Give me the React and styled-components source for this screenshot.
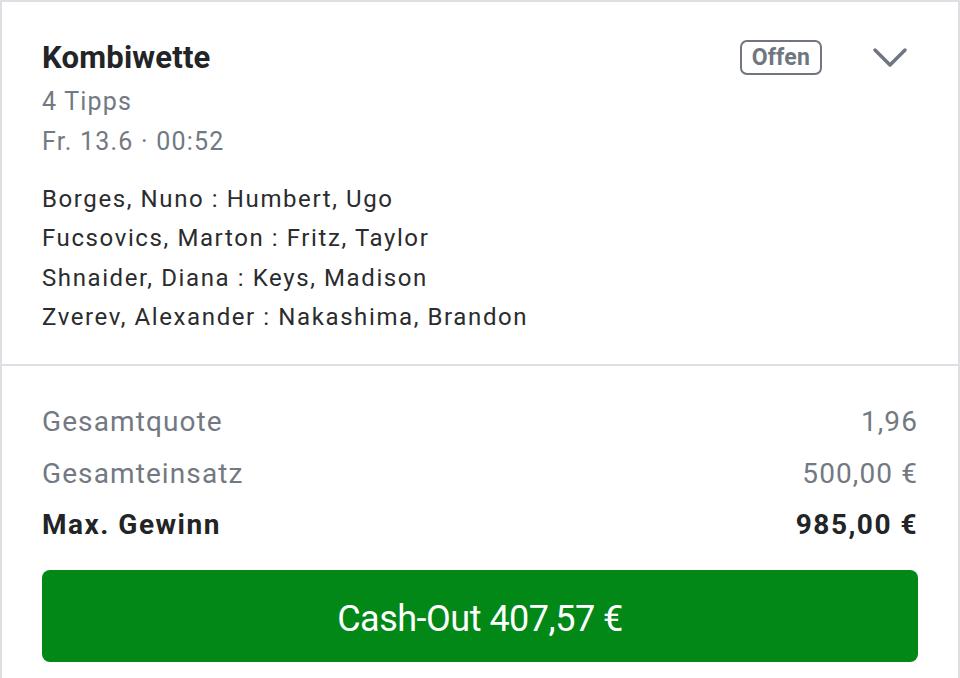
import React from 'react';
import styled, { createGlobalStyle } from 'styled-components';

const GlobalStyle = createGlobalStyle`
  html, body {
    margin: 0;
    padding: 0;
    background: #fff;
  }
  body {
    font-family: 'Roboto', 'Liberation Sans', sans-serif;
    color: #2a2c2e;
  }
`;

const picks = [
  'Borges, Nuno : Humbert, Ugo',
  'Fucsovics, Marton : Fritz, Taylor',
  'Shnaider, Diana : Keys, Madison',
  'Zverev, Alexander : Nakashima, Brandon',
];

const summary = [
  { label: 'Gesamtquote', value: '1,96' },
  { label: 'Gesamteinsatz', value: '500,00 €' },
  { label: 'Max. Gewinn', value: '985,00 €', strong: true },
];

const App = () => {
  return (
    <>
      <GlobalStyle />
      <Card>
        <Header>
          <HeaderTop>
            <Title>Kombiwette</Title>
            <Actions>
              <Badge>Offen</Badge>
              <Chevron width="36" height="24" viewBox="0 0 36 24">
                <polyline points="3,4 18,19 33,4" />
              </Chevron>
            </Actions>
          </HeaderTop>
          <Meta $gap={7}>4 Tipps</Meta>
          <Meta $gap={2}>Fr. 13.6 · 00:52</Meta>
          <Picks>
            {picks.map((p) => (
              <Pick key={p}>{p}</Pick>
            ))}
          </Picks>
        </Header>
        <Summary>
          {summary.map((row) => (
            <Row key={row.label} $strong={row.strong}>
              <span>{row.label}</span>
              <span>{row.value}</span>
            </Row>
          ))}
          <CashOut>Cash-Out 407,57 €</CashOut>
        </Summary>
      </Card>
    </>
  );
};

const Card = styled.div`
  box-sizing: border-box;
  width: 960px;
  height: 678px;
  border: 2px solid #dcdfe4;
  border-bottom: none;
  background: #fff;
  overflow: hidden;
`;

const Header = styled.div`
  padding: 38px 40px 27px 40px;
  border-bottom: 2px solid #dcdfe4;
`;

const HeaderTop = styled.div`
  display: flex;
  justify-content: space-between;
  align-items: flex-start;
`;

const Title = styled.div`
  font-size: 31px;
  font-weight: 700;
  line-height: 36px;
  letter-spacing: 0.2px;
  color: #222426;
`;

const Actions = styled.div`
  display: flex;
  align-items: center;
  gap: 50px;
  margin-right: 10px;
`;

const Badge = styled.div`
  box-sizing: border-box;
  height: 35px;
  padding: 0 10px;
  border: 2px solid #6f7680;
  border-radius: 7px;
  color: #6f7680;
  font-size: 23px;
  font-weight: 700;
  line-height: 31px;
  letter-spacing: 0.2px;
`;

const Chevron = styled.svg`
  fill: none;
  stroke: #6f7680;
  stroke-width: 3.5;
  stroke-linecap: round;
  stroke-linejoin: round;
`;

const Meta = styled.div`
  margin-top: ${(p) => p.$gap}px;
  font-size: 25px;
  line-height: 38px;
  letter-spacing: 1.2px;
  color: #727982;
`;

const Picks = styled.div`
  margin-top: 19px;
`;

const Pick = styled.div`
  font-size: 24px;
  line-height: 39.3px;
  letter-spacing: 1.6px;
  color: #2a2c2e;
`;

const Summary = styled.div`
  padding: 30px 40px 0 40px;
`;

const Row = styled.div`
  display: flex;
  justify-content: space-between;
  font-size: 28px;
  line-height: 51.5px;
  letter-spacing: ${(p) => (p.$strong ? '1.5px' : '1.1px')};
  color: ${(p) => (p.$strong ? '#222426' : '#727982')};
  font-weight: ${(p) => (p.$strong ? 700 : 400)};
`;

const CashOut = styled.button`
  display: block;
  width: 100%;
  height: 92px;
  margin-top: 19px;
  padding: 6px 0 0 0;
  border: none;
  border-radius: 8px;
  background: #018817;
  color: #fff;
  font-family: inherit;
  font-size: 36px;
  letter-spacing: -0.5px;
`;

export default App;
